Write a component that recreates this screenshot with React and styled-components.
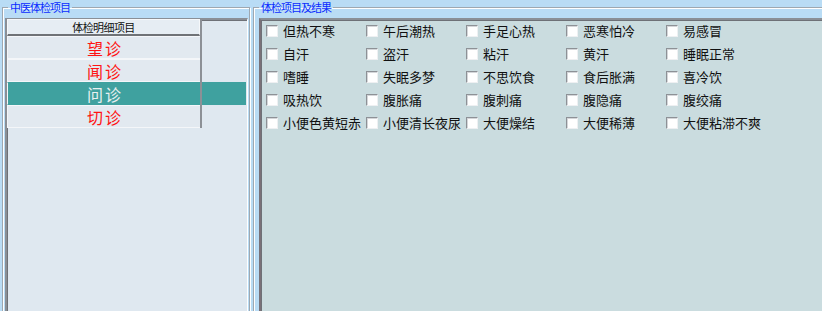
import React from 'react';
import styled, { createGlobalStyle } from 'styled-components';

const Global = createGlobalStyle`
    html, body {
        margin: 0;
        padding: 0;
        background: #b9dcf5;
    }
    body {
        font-family: "Noto Sans CJK SC", "Noto Sans", sans-serif;
    }
`

const Screen = styled.div`
    display: flex;
    align-items: flex-start;
    width: 822px;
    height: 311px;
    overflow: hidden;
    background: #b9dcf5;
`

const GroupBox = styled.fieldset`
    box-sizing: border-box;
    flex: none;
    width: ${props => props.width}px;
    height: 340px;
    margin: 0 0 0 ${props => props.offset}px;
    padding: 3px 1px 0 ${props => props.inset}px;
    border: 1px solid #9ea8b1;
    box-shadow: inset 1px 1px 0 #ffffff, 1px 1px 0 #ffffff;
    min-width: 0;

    legend {
        margin-left: ${props => 5 - props.inset}px;
        padding: 0 2px;
        font-size: 11px;
        line-height: 15px;
        letter-spacing: -1px;
        color: #0a2cff;
        white-space: nowrap;
    }
`

const Panel = styled.div`
    box-sizing: border-box;
    height: 320px;
    background: ${props => props.bg};
    border-top: 2px solid #8a8f96;
    border-left: 2px solid ${props => props.edge};
    border-right: 1px solid #ffffff;
    box-shadow: inset 1px 1px 0 #6e7177;
`

const Grid = styled.div`
    display: flex;
    flex-direction: column;
    margin-top: -1px;
`

const GridRow = styled.div`
    display: flex;
    height: ${props => props.h}px;
`

const HeadCell = styled.div`
    box-sizing: border-box;
    width: 193px;
    display: flex;
    align-items: center;
    justify-content: center;
    background: #e6edf3;
    border: 1px solid #f6f8fa;
    border-bottom: 2px solid #6f7276;
    font-size: 11px;
    letter-spacing: -0.6px;
    color: #111;
`

const Cell = styled.div`
    box-sizing: border-box;
    width: 193px;
    display: flex;
    align-items: center;
    justify-content: center;
    background: ${props => props.selected ? '#3fa19f' : '#e2e9f0'};
    border-top: 1px solid ${props => props.selected ? '#3fa19f' : '#f4f6f9'};
    border-bottom: 1px solid ${props => props.selected ? '#3fa19f' : '#f4f6f9'};
    border-left: 1px solid #f4f6f9;
    font-size: 16px;
    letter-spacing: 2px;
    padding-left: 2px;
    color: ${props => props.selected ? '#e9f0f1' : '#ff1414'};
`

const Divider = styled.div`
    width: 2px;
    background: #8c9096;
`

const Filler = styled.div`
    flex: 1;
    margin-right: 1px;
    background: ${props => props.selected ? '#3fa19f' : 'transparent'};
`

const Checks = styled.div`
    display: grid;
    grid-template-columns: repeat(5, 100px);
    grid-auto-rows: 23px;
    margin-top: -1px;
    padding: 0 0 0 5px;
`

const CheckItem = styled.label`
    display: flex;
    align-items: center;
    white-space: nowrap;
    font-size: 13px;
    color: #111;
`

const Box = styled.span`
    box-sizing: border-box;
    flex: none;
    width: 12px;
    height: 12px;
    margin-right: 5px;
    background: #ffffff;
    border-top: 1px solid #8d9196;
    border-left: 1px solid #8d9196;
    border-right: 1px solid #eef0f2;
    border-bottom: 1px solid #eef0f2;
    box-shadow: inset 1px 1px 0 #d4d6d9;
`

const items = ['望诊', '闻诊', '问诊', '切诊'];

const checks = [
    '但热不寒', '午后潮热', '手足心热', '恶寒怕冷', '易感冒',
    '自汗', '盗汗', '粘汗', '黄汗', '睡眠正常',
    '嗜睡', '失眠多梦', '不思饮食', '食后胀满', '喜冷饮',
    '吸热饮', '腹胀痛', '腹刺痛', '腹隐痛', '腹绞痛',
    '小便色黄短赤', '小便清长夜尿', '大便燥结', '大便稀薄', '大便粘滞不爽',
];

export default function App() {
    const selected = 2;

    return (
        <Screen>
            <Global />
            <GroupBox width={248} offset={2} inset={2}>
                <legend>中医体检项目</legend>
                <Panel bg="#dfe8f0" edge="#8a8f96">
                    <Grid>
                        <GridRow h={17}>
                            <HeadCell>体检明细项目</HeadCell>
                            <Divider />
                            <Filler />
                        </GridRow>
                        {items.map((name, i) => (
                            <GridRow h={23} key={name}>
                                <Cell selected={i === selected}>{name}</Cell>
                                <Divider />
                                <Filler selected={i === selected} />
                            </GridRow>
                        ))}
                    </Grid>
                </Panel>
            </GroupBox>

            <GroupBox width={600} offset={3} inset={5}>
                <legend>体检项目及结果</legend>
                <Panel bg="#cadcdf" edge="#7a7178">
                    <Checks>
                        {checks.map(c => (
                            <CheckItem key={c}>
                                <Box />
                                {c}
                            </CheckItem>
                        ))}
                    </Checks>
                </Panel>
            </GroupBox>
        </Screen>
    )
}
